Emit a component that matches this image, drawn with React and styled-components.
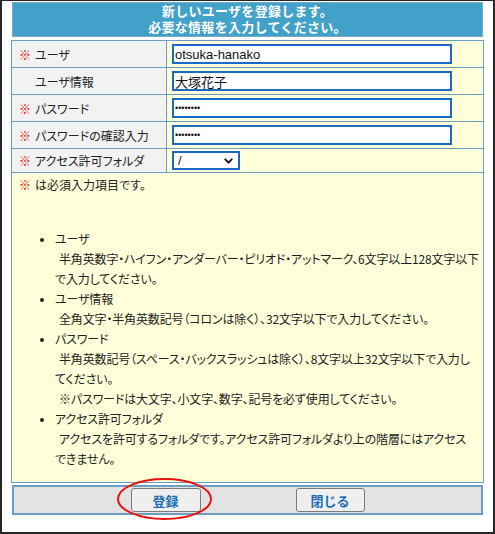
import React from 'react'
import styled, { createGlobalStyle } from 'styled-components'
import { ChevronDown } from 'lucide-react'

const GlobalStyle = createGlobalStyle`
    html, body {
        margin: 0;
        padding: 0;
        background: #fff;
    }
    body {
        font-family: "Noto Sans CJK JP", "Noto Sans", sans-serif;
        font-size: 12px;
        color: #222;
    }
`

const Frame = styled.div`
    width: 495px;
    height: 534px;
    box-sizing: border-box;
    border-style: solid;
    border-color: #262626;
    border-width: 1px 2px 2px 2px;
    padding: 1px 9px 0;
    background: #fff;
    display: flex;
    flex-direction: column;
`

const Header = styled.div`
    margin: 0 1px;
    height: 35px;
    box-sizing: border-box;
    background: #42a1c8;
    border: 1px solid #79aac6;
    color: #fff;
    font-weight: bold;
    font-size: 13px;
    line-height: 16px;
    letter-spacing: 0.3px;
    text-align: center;
`

const FormGrid = styled.div`
    margin-top: 3px;
    display: grid;
    grid-template-columns: 154px 1fr;
    gap: 1px;
    background: #6b9ec2;
    border: 1px solid #6b9ec2;
`

const LabelCell = styled.div`
    background: #f2f2f2;
    display: flex;
    align-items: center;
    padding-left: 7px;
    font-feature-settings: "palt";
`

const ValueCell = styled.div`
    background: #ffffd9;
    display: flex;
    align-items: center;
    padding: ${props => props.$compact ? '2px 5px' : '3px 5px'};
`

const Mark = styled.span`
    display: inline-block;
    width: 12px;
    margin-right: 4px;
    text-align: center;
    color: #e60000;
    font-weight: bold;
    visibility: ${props => props.$hidden ? 'hidden' : 'visible'};
`

const TextInput = styled.input`
    width: 280px;
    height: 20px;
    box-sizing: border-box;
    margin: 0;
    padding: 0 1px;
    border: 2px solid #1a68c8;
    border-radius: 0;
    outline: none;
    background: #fff;
    color: #111;
    font-family: "Liberation Sans", "Noto Sans CJK JP", sans-serif;
    font-size: ${props => props.type === 'password' ? '9px' : '13px'};
`

const SelectWrap = styled.div`
    position: relative;
    width: 68px;
    height: 19px;
`

const Select = styled.select`
    appearance: none;
    width: 100%;
    height: 100%;
    box-sizing: border-box;
    margin: 0;
    padding: 0 0 0 4px;
    border: 2px solid #1a68c8;
    border-radius: 0;
    background: #fff;
    color: #111;
    font-family: "Liberation Sans", sans-serif;
    font-size: 13px;
    outline: none;
`

const Chevron = styled(ChevronDown)`
    position: absolute;
    right: 5px;
    top: 50%;
    transform: translateY(-50%);
    pointer-events: none;
    color: #111;
`

const NotesCell = styled.div`
    grid-column: 1 / -1;
    background: #ffffd9;
    padding: 2px 0 13px;
    line-height: 20px;
    font-feature-settings: "palt";
`

const RequiredNote = styled.div`
    padding-left: 7px;
`

const List = styled.ul`
    margin: 34px 0 0;
    padding-left: 43px;
    & li::marker {
        font-size: 10px;
    }
`

const Line = styled.span`
    display: block;
    white-space: nowrap;
    letter-spacing: -0.15px;
    padding-left: ${props => props.$indent ? '4px' : '0'};
`

const ButtonBar = styled.div`
    position: relative;
    z-index: 1;
    margin: 2px 1px 0;
    display: flex;
    justify-content: center;
    gap: 95px;
    background: #e3e3e3;
    border: 2px solid #6b9ec2;
    padding: 1px 0;
`

const ButtonSpot = styled.div`
    position: relative;
    display: flex;
`

const Button = styled.button`
    width: ${props => props.$width}px;
    height: 24px;
    margin: 0;
    padding: 0;
    background: #efefef;
    border: 1px solid #7a7a7a;
    border-radius: 3px;
    color: #1c6db4;
    font-family: "Noto Sans CJK JP", sans-serif;
    font-weight: bold;
    font-size: 13px;
`

const Highlight = styled.svg`
    position: absolute;
    left: -14px;
    top: -10px;
    width: 95px;
    height: 42px;
    overflow: visible;
    pointer-events: none;
`

const fields = [
    { label: 'ユーザ', required: true, type: 'text', value: 'otsuka-hanako' },
    { label: 'ユーザ情報', required: false, type: 'text', value: '大塚花子' },
    { label: 'パスワード', required: true, type: 'password', value: 'password' },
    { label: 'パスワードの確認入力', required: true, type: 'password', value: 'password' },
]

const notes = [
    {
        title: 'ユーザ',
        lines: [
            ['半角英数字・ハイフン・アンダーバー・ピリオド・アットマーク、6文字以上128文字以下', true],
            ['で入力してください。', false],
        ],
    },
    {
        title: 'ユーザ情報',
        lines: [
            ['全角文字・半角英数記号（コロンは除く）、32文字以下で入力してください。', true],
        ],
    },
    {
        title: 'パスワード',
        lines: [
            ['半角英数記号（スペース・バックスラッシュは除く）、8文字以上32文字以下で入力し', true],
            ['てください。', false],
            ['※パスワードは大文字、小文字、数字、記号を必ず使用してください。', true],
        ],
    },
    {
        title: 'アクセス許可フォルダ',
        lines: [
            ['アクセスを許可するフォルダです。アクセス許可フォルダより上の階層にはアクセス', true],
            ['できません。', false],
        ],
    },
]

export default function App() {
    return (
        <>
            <GlobalStyle />
            <Frame>
                <Header>
                    新しいユーザを登録します。<br />
                    必要な情報を入力してください。
                </Header>
                <FormGrid>
                    {fields.map(f => (
                        <React.Fragment key={f.label}>
                            <LabelCell>
                                <Mark $hidden={!f.required}>※</Mark>{f.label}
                            </LabelCell>
                            <ValueCell>
                                <TextInput type={f.type} defaultValue={f.value} />
                            </ValueCell>
                        </React.Fragment>
                    ))}
                    <LabelCell>
                        <Mark>※</Mark>アクセス許可フォルダ
                    </LabelCell>
                    <ValueCell $compact>
                        <SelectWrap>
                            <Select defaultValue="/">
                                <option value="/">/</option>
                            </Select>
                            <Chevron size={13} strokeWidth={3.5} />
                        </SelectWrap>
                    </ValueCell>
                    <NotesCell>
                        <RequiredNote><Mark>※</Mark>は必須入力項目です。</RequiredNote>
                        <List>
                            {notes.map(n => (
                                <li key={n.title}>
                                    <Line>{n.title}</Line>
                                    {n.lines.map(([text, indent]) => (
                                        <Line key={text} $indent={indent}>{text}</Line>
                                    ))}
                                </li>
                            ))}
                        </List>
                    </NotesCell>
                </FormGrid>
                <ButtonBar>
                    <ButtonSpot>
                        <Button $width={70}>登録</Button>
                        <Highlight viewBox="0 0 95 42">
                            <ellipse cx="47.5" cy="21" rx="46.5" ry="20" fill="none" stroke="#e8120c" strokeWidth="2" />
                        </Highlight>
                    </ButtonSpot>
                    <Button $width={69}>閉じる</Button>
                </ButtonBar>
            </Frame>
        </>
    )
}
